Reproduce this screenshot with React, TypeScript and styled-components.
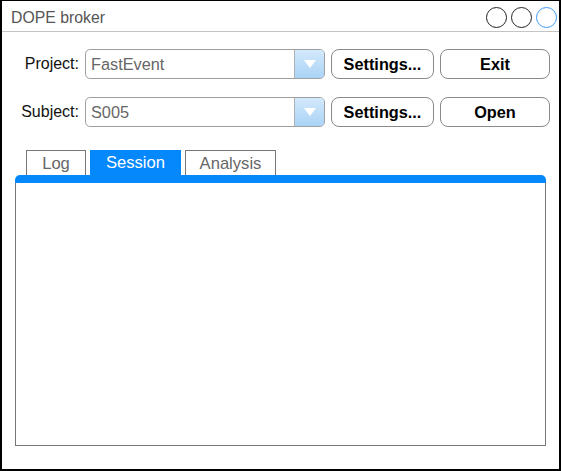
import React from "react";
import styled, { createGlobalStyle } from "styled-components";

const Global = createGlobalStyle`
  html, body { margin: 0; padding: 0; background: #fff; }
  * { box-sizing: border-box; }
  body { font-family: "Liberation Sans", Arial, sans-serif; }
`;

const Window = styled.div`
  width: 561px;
  height: 471px;
  border: 2px solid #000;
  border-top-width: 1px;
  display: flex;
  flex-direction: column;
  background: #fff;
`;

const TitleBar = styled.div`
  height: 31px;
  flex: none;
  display: flex;
  align-items: center;
  justify-content: space-between;
  padding: 3px 2px 0 9px;
  border-bottom: 1px solid #c4c4c4;
`;

const Title = styled.span`
  font-size: 15.8px;
  color: #555;
`;

const Controls = styled.div`
  display: flex;
  gap: 4px;
  margin-top: -1px;
`;

const Circle = styled.span<{ $active?: boolean }>`
  width: 21px;
  height: 21px;
  border-radius: 50%;
  border: 1px solid ${(p) => (p.$active ? "#3d9bf5" : "#222")};
`;

const Body = styled.div`
  flex: 1;
  display: flex;
  flex-direction: column;
  padding: 17px 13px 23px 0;
`;

const Form = styled.div`
  display: grid;
  grid-template-columns: 77px 240px 103px 110px;
  column-gap: 6px;
  row-gap: 18px;
  align-items: center;
`;

const Label = styled.label`
  font-size: 16px;
  color: #111;
  text-align: right;
`;

const Combo = styled.div`
  height: 30px;
  border: 1px solid #a0a0a0;
  border-radius: 5px;
  display: flex;
  overflow: hidden;
`;

const ComboText = styled.span`
  flex: 1;
  font-size: 16.3px;
  color: #666;
  padding-left: 5px;
  display: flex;
  align-items: center;
`;

const ComboArrow = styled.span`
  width: 30px;
  border-left: 1px solid #b0b0b0;
  background: linear-gradient(#d3e9fc, #a9d3f6);
  display: flex;
  align-items: center;
  justify-content: center;
`;

const Triangle = styled.span`
  width: 0;
  height: 0;
  border-left: 6px solid transparent;
  border-right: 6px solid transparent;
  border-top: 8px solid #fff;
`;

const Button = styled.button`
  height: 30px;
  border: 1px solid #8a8a8a;
  border-radius: 8px;
  background: #fff;
  font-family: "Liberation Sans", Arial, sans-serif;
  font-weight: bold;
  font-size: 16.3px;
  color: #000;
  padding: 0;
`;

const TabArea = styled.div`
  flex: 1;
  display: flex;
  flex-direction: column;
  margin-top: 23px;
  padding-left: 13px;
`;

const TabStrip = styled.div`
  display: flex;
  gap: 4px;
  padding-left: 11px;
  height: 25px;
`;

const Tab = styled.div<{ $active?: boolean; $w: number }>`
  width: ${(p) => p.$w}px;
  display: flex;
  align-items: center;
  justify-content: center;
  font-size: 16.6px;
  padding-top: 1px;
  color: ${(p) => (p.$active ? "#fff" : "#666")};
  background: ${(p) => (p.$active ? "#0588fb" : "#fff")};
  border: ${(p) => (p.$active ? "none" : "1px solid #777")};
  border-bottom: none;
`;

const TabBar = styled.div`
  height: 8px;
  background: #0588fb;
  border-radius: 5px 5px 0 0;
`;

const Panel = styled.div`
  flex: 1;
  border: 1px solid #777;
  border-top: none;
`;

export default function App() {
  return (
    <>
      <Global />
      <Window>
        <TitleBar>
          <Title>DOPE broker</Title>
          <Controls>
            <Circle />
            <Circle />
            <Circle $active />
          </Controls>
        </TitleBar>
        <Body>
          <Form>
            <Label>Project:</Label>
            <Combo>
              <ComboText>FastEvent</ComboText>
              <ComboArrow>
                <Triangle />
              </ComboArrow>
            </Combo>
            <Button>Settings...</Button>
            <Button>Exit</Button>
            <Label>Subject:</Label>
            <Combo>
              <ComboText>S005</ComboText>
              <ComboArrow>
                <Triangle />
              </ComboArrow>
            </Combo>
            <Button>Settings...</Button>
            <Button>Open</Button>
          </Form>
          <TabArea>
            <TabStrip>
              <Tab $w={60}>Log</Tab>
              <Tab $w={91} $active>
                Session
              </Tab>
              <Tab $w={91}>Analysis</Tab>
            </TabStrip>
            <TabBar />
            <Panel />
          </TabArea>
        </Body>
      </Window>
    </>
  );
}
